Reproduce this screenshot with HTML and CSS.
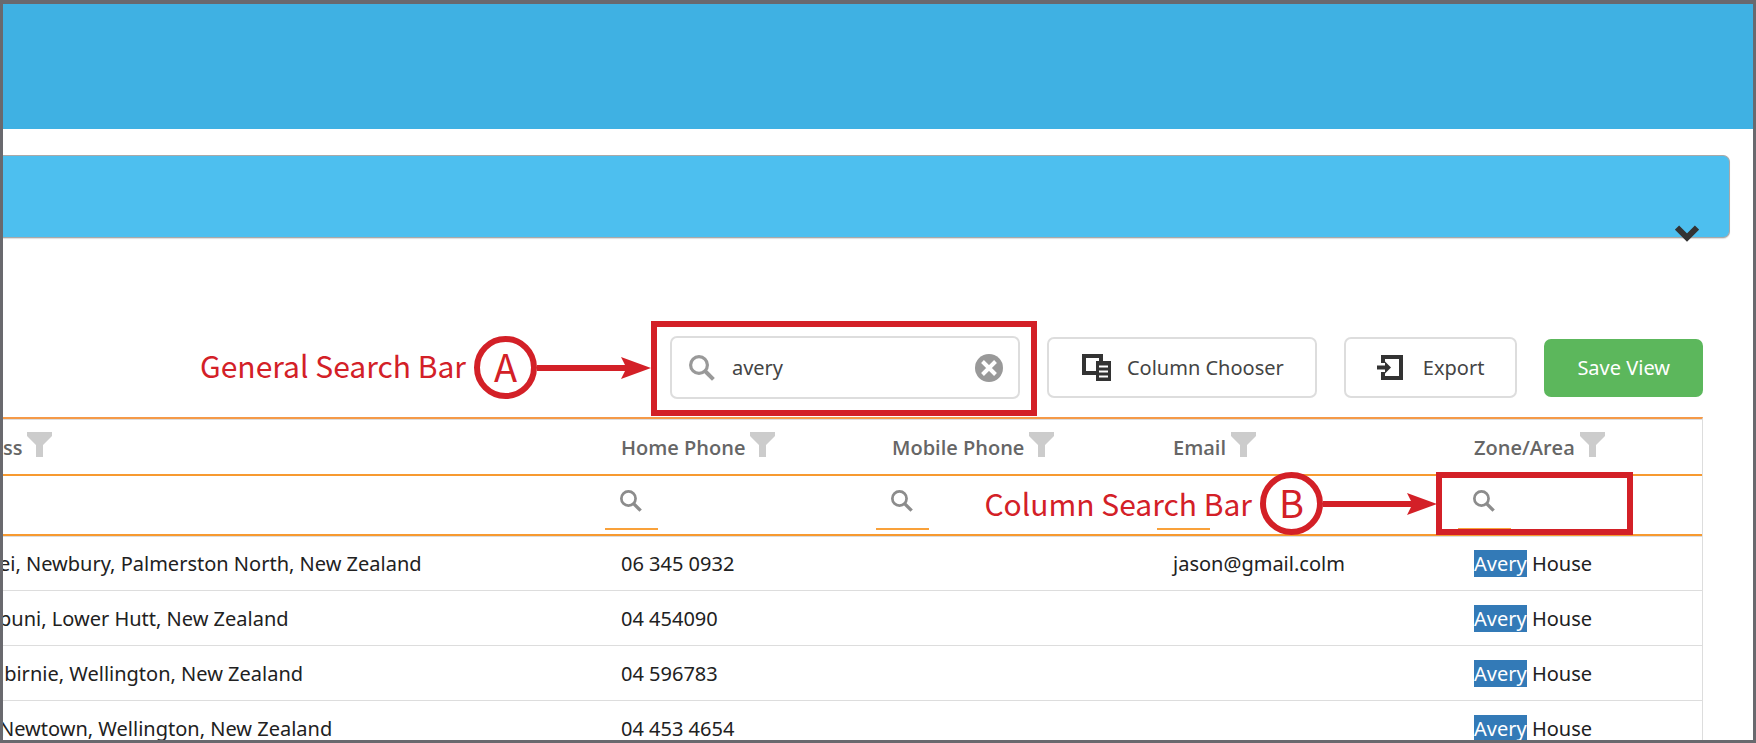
FILE: index.html
```html
<!DOCTYPE html>
<html lang="en">

<head>
    <meta charset="UTF-8">
    <title>Contacts</title>
    <link rel="stylesheet" href="styles.css">
</head>

<body>
    <!-- shared icons -->
    <svg class="sprite" aria-hidden="true">
        <symbol id="icon-search" viewBox="0 0 26 26">
            <circle cx="10" cy="10" r="8.4" fill="none" stroke="currentColor" stroke-width="3.2" />
            <path d="M15.5 15.5 L24.4 24.4" stroke="currentColor" stroke-width="4" />
        </symbol>
        <symbol id="icon-funnel" viewBox="0 0 25 25">
            <path d="M0 0 H25 V4 L16 13 V25 H9 V13 L0 4 Z" fill="currentColor" />
        </symbol>
    </svg>

    <header class="topbar"></header>

    <main>
        <section class="panel">
            <button class="panel-toggle" type="button" aria-label="Expand">
                <svg width="24" height="17" viewBox="0 0 24 17"><path d="M2 2.5 L12 12.5 L22 2.5" fill="none" stroke="#333" stroke-width="6" /></svg>
            </button>
        </section>

        <div class="toolbar">
            <div class="search">
                <label for="search" aria-label="Search"><svg class="search-icon"><use href="#icon-search" /></svg></label>
                <input type="text" id="search" value="avery">
                <button class="clear" type="button" aria-label="Clear">
                    <svg width="28" height="28" viewBox="0 0 28 28"><circle cx="14" cy="14" r="14" fill="#999" /><path d="M7.5 7.5 L20.5 20.5 M20.5 7.5 L7.5 20.5" stroke="#fff" stroke-width="4" /></svg>
                </button>
                <div class="outline"></div>
                <div class="callout">
                    <span class="callout-text">General Search Bar</span>
                    <span class="letter">A</span>
                    <svg class="arrow" viewBox="0 0 114 22"><path d="M0 8 H88 L84 0 L114 11 L84 22 L88 14 H0 Z" fill="#d32027" /></svg>
                </div>
            </div>
            <button class="btn chooser" type="button">
                <svg width="29" height="27" viewBox="0 0 29 27"><path d="M2 2 H19 V19 H2 Z" fill="none" stroke="#333" stroke-width="4" /><path d="M14 7 H29 V27 H14 Z" fill="#333" /><path d="M17 12.5 H26 M17 17.5 H26 M17 22.5 H26" stroke="#fff" stroke-width="2" /></svg>
                Column Chooser
            </button>
            <button class="btn export" type="button">
                <svg width="26" height="25" viewBox="0 0 26 25"><path d="M6 8 V2 H24 V23 H6 V17" fill="none" stroke="#333" stroke-width="4" /><path d="M0 12.5 H10" stroke="#333" stroke-width="4" /><path d="M8 6.5 L14 12.5 L8 18.5 Z" fill="#333" /></svg>
                Export
            </button>
            <button class="btn save" type="button">Save View</button>
        </div>

        <table class="grid">
            <colgroup>
                <col>
                <col class="col-home">
                <col class="col-mobile">
                <col class="col-email">
                <col class="col-zone">
            </colgroup>
            <thead>
                <tr class="head">
                    <th>ss<svg class="funnel"><use href="#icon-funnel" /></svg></th>
                    <th>Home Phone<svg class="funnel"><use href="#icon-funnel" /></svg></th>
                    <th>Mobile Phone<svg class="funnel"><use href="#icon-funnel" /></svg></th>
                    <th>Email<svg class="funnel"><use href="#icon-funnel" /></svg></th>
                    <th>Zone/Area<svg class="funnel"><use href="#icon-funnel" /></svg></th>
                </tr>
                <tr class="filters">
                    <td></td>
                    <td>
                        <div class="filter"><label for="f-home" aria-label="Home Phone"><svg><use href="#icon-search" /></svg></label><input type="text" id="f-home"></div>
                    </td>
                    <td>
                        <div class="filter"><label for="f-mobile" aria-label="Mobile Phone"><svg><use href="#icon-search" /></svg></label><input type="text" id="f-mobile"></div>
                    </td>
                    <td>
                        <div class="filter"><input type="text" id="f-email" aria-label="Email"></div>
                    </td>
                    <td>
                        <div class="filter"><label for="f-zone" aria-label="Zone/Area"><svg><use href="#icon-search" /></svg></label><input type="text" id="f-zone"></div>
                        <div class="outline"></div>
                        <div class="callout">
                            <span class="callout-text">Column Search Bar</span>
                            <span class="letter">B</span>
                            <svg class="arrow" viewBox="0 0 114 22"><path d="M0 8 H88 L84 0 L114 11 L84 22 L88 14 H0 Z" fill="#d32027" /></svg>
                        </div>
                    </td>
                </tr>
            </thead>
            <tbody>
                <tr>
                    <td>ei, Newbury, Palmerston North, New Zealand</td>
                    <td>06 345 0932</td>
                    <td></td>
                    <td>jason@gmail.colm</td>
                    <td><mark>Avery</mark> House</td>
                </tr>
                <tr>
                    <td>puni, Lower Hutt, New Zealand</td>
                    <td>04 454090</td>
                    <td></td>
                    <td></td>
                    <td><mark>Avery</mark> House</td>
                </tr>
                <tr>
                    <td>lbirnie, Wellington, New Zealand</td>
                    <td>04 596783</td>
                    <td></td>
                    <td></td>
                    <td><mark>Avery</mark> House</td>
                </tr>
                <tr>
                    <td>Newtown, Wellington, New Zealand</td>
                    <td>04 453 4654</td>
                    <td></td>
                    <td></td>
                    <td><mark>Avery</mark> House</td>
                </tr>
            </tbody>
        </table>
    </main>
</body>

</html>
```

FILE: styles.css
```css
* {
    box-sizing: border-box;
}

body {
    margin: 0;
    height: 100vh;
    overflow: hidden;
    border: 3px solid #69696e;
    border-top-width: 4px;
    background-color: #fff;
    color: #212121;
    font-family: "Noto Sans", "Open Sans", sans-serif;
    font-size: 20px;
    line-height: 27px;
}

.sprite {
    position: absolute;
    width: 0;
    height: 0;
}

button,
input {
    font: inherit;
    color: inherit;
}

svg {
    display: block;
    flex: none;
}

.topbar {
    height: 125px;
    background-color: #3fb1e3;
}

.panel {
    position: relative;
    height: 83px;
    margin: 26px 23px 0 0;
    border: 1px solid #a9a9a9;
    border-left: 0;
    border-radius: 0 7px 7px 0;
    box-shadow: 0 1px 1px #ddd;
    background-color: #4dbfef;
}

/* chevron hangs over the bottom edge of the panel */
.panel-toggle {
    position: absolute;
    right: 30px;
    bottom: -5px;
    padding: 0;
    border: 0;
    background: none;
}

.toolbar {
    display: flex;
    justify-content: flex-end;
    align-items: center;
    gap: 27px;
    margin: 98px 50px 18px 0;
    color: #444;
}

.search {
    position: relative;
    display: flex;
    align-items: center;
    width: 350px;
    height: 63px;
    padding: 0 15px 0 17px;
    border: 2px solid #ddd;
    border-radius: 7px;
}

.search-icon {
    width: 26px;
    height: 26px;
    color: #999;
}

.search input {
    flex: 1;
    min-width: 0;
    padding: 0 0 0 17px;
    border: 0;
    outline: 0;
    background: none;
}

.clear {
    padding: 0;
    border: 0;
    background: none;
}

.btn {
    display: flex;
    align-items: center;
    height: 61px;
    border: 2px solid #ddd;
    border-radius: 7px;
    background-color: #fff;
}

.chooser {
    gap: 16px;
    padding: 0 31px 0 33px;
}

.export {
    gap: 20px;
    padding: 0 31px;
}

.save {
    height: 58px;
    padding: 0 33px;
    border: 0;
    background-color: #5cb75c;
    color: #fff;
}

.grid {
    width: calc(100% - 50px);
    table-layout: fixed;
    border-collapse: separate;
    border-spacing: 0;
    border-top: 2px solid #f59a48;
    border-right: 1px solid #ddd;
}

.col-home {
    width: 271px;
}

.col-mobile {
    width: 281px;
}

.col-email {
    width: 301px;
}

.col-zone {
    width: 244px;
}

.grid th,
.grid td {
    height: 55px;
    padding: 0 0 0 16px;
    border-bottom: 1px solid #ddd;
    text-align: left;
    white-space: nowrap;
}

/* address column is cut by the left edge of the window */
.grid th:first-child {
    padding-left: 0;
}

.grid td:first-child {
    padding-left: 0;
    text-indent: -4px;
}

.grid .head th {
    height: 57px;
    padding-bottom: 2px;
    border-top: 1px solid #ddd;
    border-bottom: 2px solid #f79a30;
    color: #666;
    font-family: "Open Sans", "Noto Sans", sans-serif;
    font-weight: 600;
}

.funnel {
    display: inline-block;
    width: 25px;
    height: 25px;
    margin-left: 5px;
    vertical-align: -2px;
    color: #ccc;
}

.grid .filters td {
    position: relative;
    height: 60px;
    padding: 0;
    border-bottom: 2px solid #f79a30;
}

.filter {
    display: flex;
    width: 53px;
    height: 40px;
    margin-top: 10px;
    padding-left: 15px;
    border-bottom: 2px solid #f9a13a;
}

.filter svg {
    width: 22px;
    height: 22px;
    color: #8c8c8c;
}

.filter input {
    flex: 1;
    width: 0;
    min-width: 0;
    padding: 0;
    border: 0;
    background: none;
}

.grid tbody tr:first-child td {
    border-top: 1px solid #ddd;
}

mark {
    background-color: #337ab7;
    color: #fff;
}

/* callouts */
.outline {
    position: absolute;
    border: 6px solid #d32027;
    pointer-events: none;
}

.search .outline {
    inset: -17px -19px -19px -21px;
}

.filters .outline {
    top: -4px;
    bottom: -1px;
    left: -22px;
    width: 197px;
}

.callout {
    position: absolute;
    top: -2px;
    right: calc(100% + 21px);
    display: flex;
    align-items: center;
    height: 63px;
    color: #d32027;
    font-family: "Noto Sans CJK SC", sans-serif;
    font-size: 30px;
    white-space: nowrap;
}

.filters .callout {
    top: -4px;
}

.search .callout-text {
    padding-bottom: 4px;
}

.letter {
    display: flex;
    align-items: center;
    justify-content: center;
    width: 63px;
    height: 63px;
    margin-left: 8px;
    padding-bottom: 4px;
    border: 6px solid;
    border-radius: 50%;
    font-size: 38px;
}

.arrow {
    width: 114px;
    height: 22px;
}
```
